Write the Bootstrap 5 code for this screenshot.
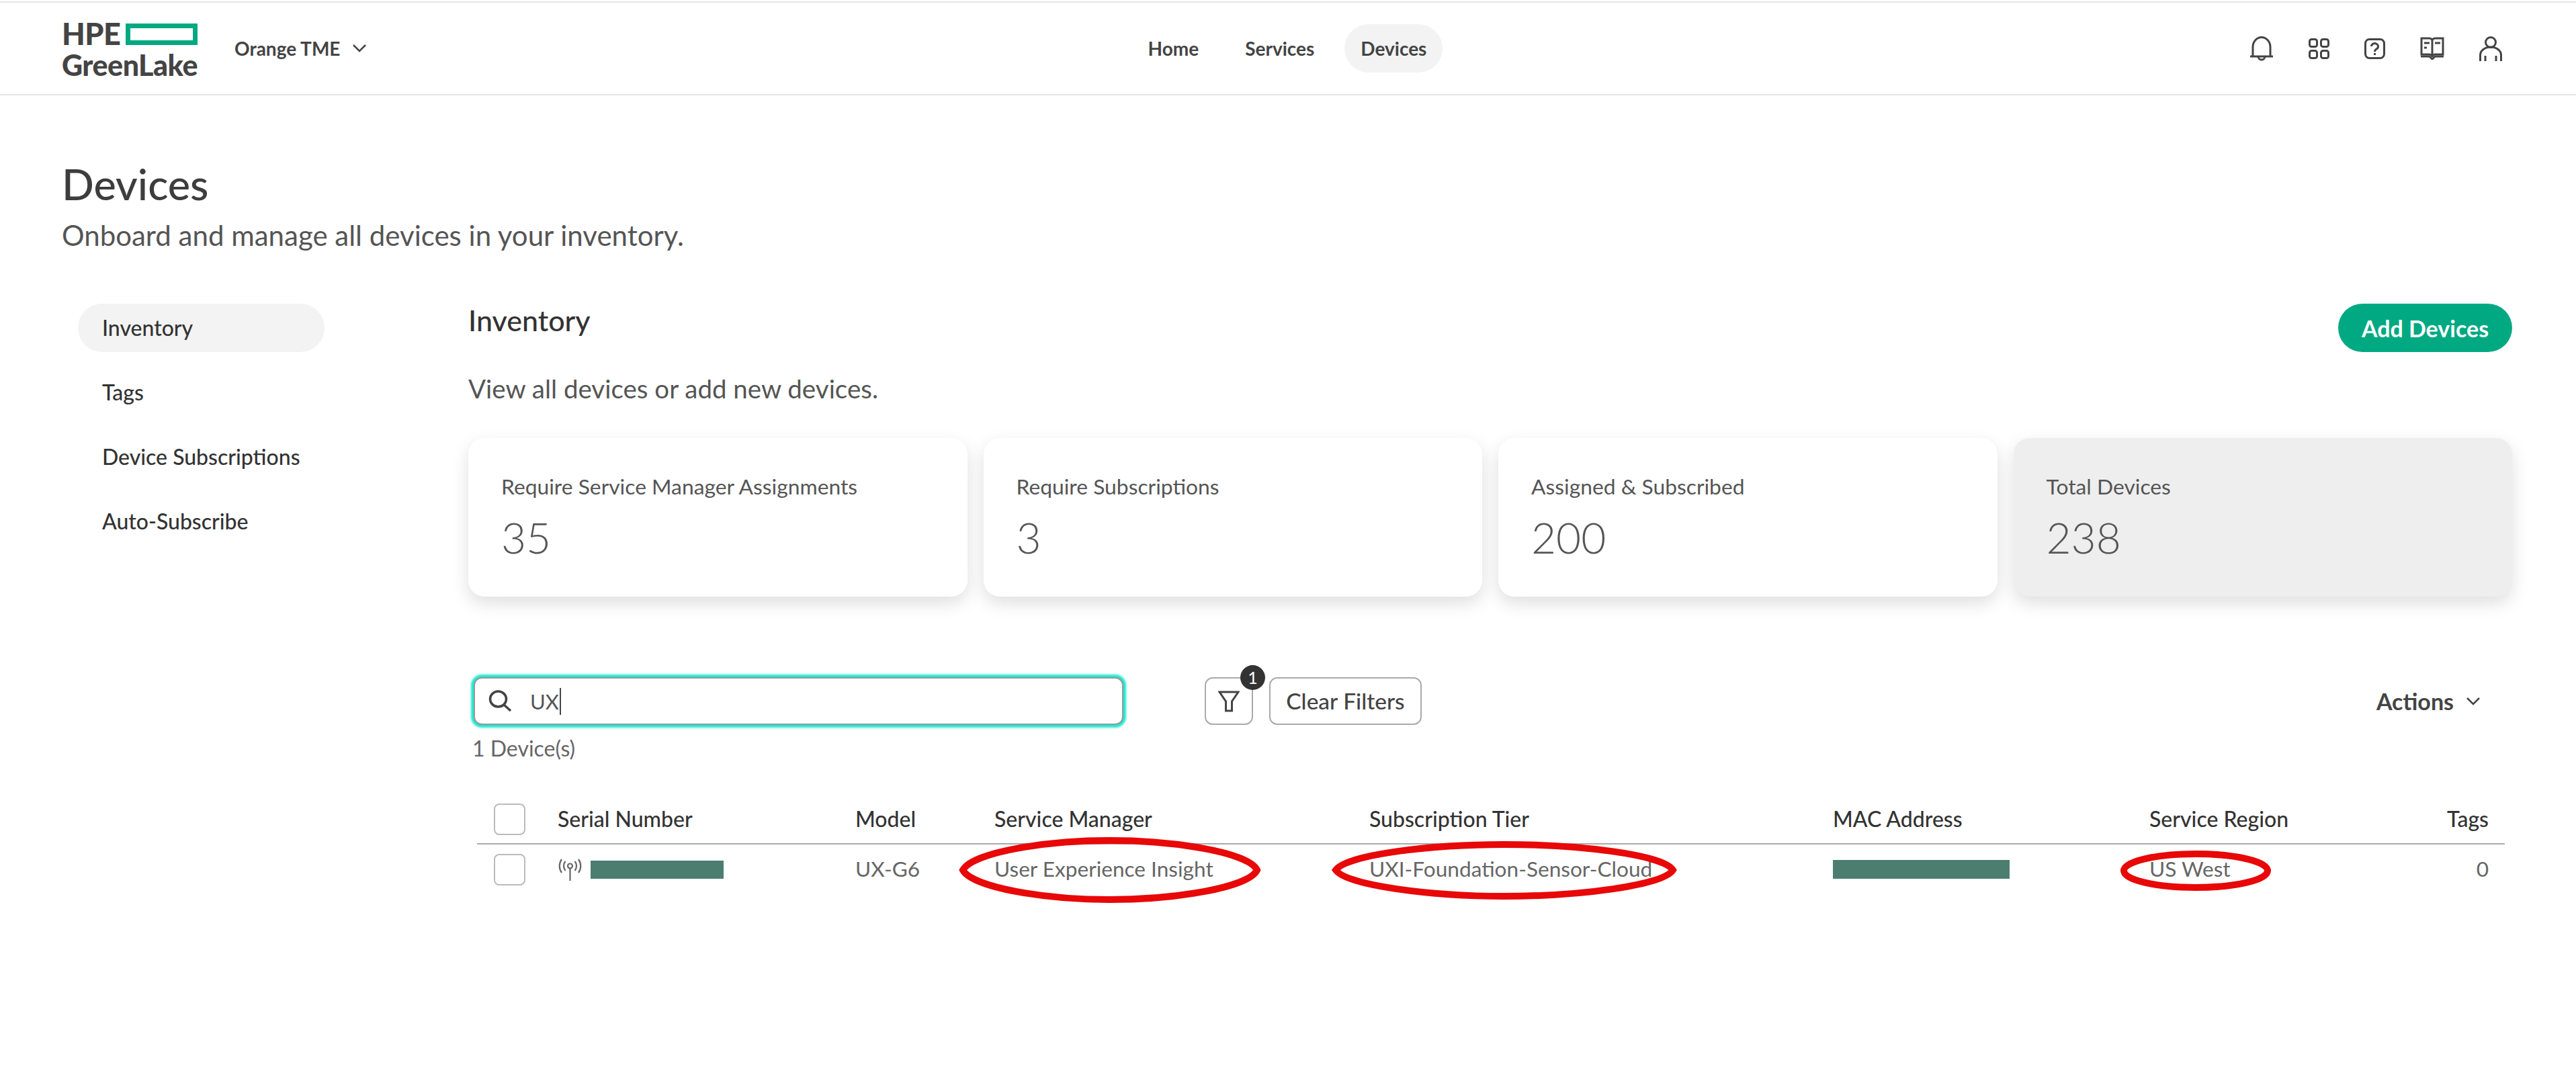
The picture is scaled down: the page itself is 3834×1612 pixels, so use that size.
<!DOCTYPE html>
<html lang="en">
<head>
<meta charset="utf-8">
<title>Devices</title>
<link href="https://cdn.jsdelivr.net/npm/bootstrap@5.3.0/dist/css/bootstrap.min.css" rel="stylesheet">
<style>
html,body{margin:0;height:100%;background:#fff}
body{font-family:"Lato","Noto Sans",sans-serif;color:#444;overflow:hidden}
.shell{position:relative;width:3834px;height:1612px}
.topbar{margin-top:2px;height:140px;border-top:2px solid #e6e6e6;border-bottom:2px solid #e6e6e6;padding:0 92px}
.side-zone{flex:1 1 0;min-width:0}
.brand{width:201px;line-height:1;font-weight:900;color:#444;white-space:nowrap}
.brand-top{height:34px;gap:8px;font-size:45px;letter-spacing:-.5px}
.brand-box{width:107px;height:32px;border:7px solid #01a982;flex:none}
.brand-bot{font-size:43px;margin-top:7px;letter-spacing:-.5px;height:36px}
.org{margin-left:56px;font-size:28px;font-weight:700;gap:19px;color:#444;white-space:nowrap}
.topnav{gap:21px;margin-left:16px}
.topnav .nav-link{height:72px;padding:0 24px;border-radius:36px;color:#444;font-size:28px;font-weight:700;display:flex;align-items:center}
.topnav .nav-link.active{background:#f3f3f3}
.tool-icons{gap:52px;margin-right:18px}
.pagehead{padding-left:92px;margin-top:96px}
.pagehead h1{font-size:63px;line-height:72px;font-weight:500;margin:0;color:#3d3d3d}
.pagehead p{font-size:42px;line-height:48px;margin:16px 0 0;color:#555}
.body-row{margin-top:78px;padding-left:116px}
.sidenav{width:366px;gap:24px}
.sidenav .nav-link{height:72px;padding:0 36px;border-radius:36px;font-size:32px;font-weight:500;color:#333;display:flex;align-items:center;white-space:nowrap}
.sidenav .nav-link.active{background:#f3f3f3}
.mainpane{margin-left:215px;width:3042px}
.pane-head{height:72px}
.pane-head h2{font-size:43px;line-height:50px;font-weight:500;margin:0;color:#333}
.btn-add{height:72px;width:259px;padding:0;border-radius:36px;border:0;background:#01a982;color:#fff;font-size:34px;font-weight:700}
.pane-sub{margin:30px 0 0;font-size:38.500px;line-height:48px;color:#555}
.stats{margin-top:50px;gap:24px}
.statcard{flex:1 1 0;height:236px;border:0;border-radius:24px;padding:0 49px;background:#fff;box-shadow:0 10px 26px rgba(0,0,0,.13)}
.statcard.muted-card{background:#eee}
.stat-label{font-size:31.800px;line-height:40px;margin-top:52px;color:#555}
.stat-value{font-size:64px;line-height:72px;font-weight:300;margin-top:20px;color:#555}
.toolbar{margin-top:120px;height:71px}
.searchbox{margin-left:8px;width:967px;height:71px;border:2px solid #999;border-radius:12px;box-shadow:0 0 3px 4px #1fe8d0;padding-left:20px;background:#fff}
.search-text{font-size:31px;margin-left:26px;color:#555;line-height:40px}
.caretbar{width:2px;height:40px;background:#444;margin-left:1px}
.btn-filter{position:relative;margin-left:121px;width:72px;height:71px;padding:0;border:2px solid #aaa;border-radius:12px;background:#fff;display:flex;align-items:center;justify-content:center}
.fbadge{position:absolute;top:-20px;right:-20px;width:37px;height:37px;border-radius:50%;background:#333;color:#fff;font-size:25px;font-weight:400;display:flex;align-items:center;justify-content:center}
.btn-clear{margin-left:24px;width:227px;height:71px;padding:0;border:2px solid #aaa;border-radius:12px;background:#fff;color:#444;font-size:33.500px;font-weight:500}
.actions{margin-left:auto;margin-right:48px;gap:19px;font-size:34px;font-weight:700;color:#444}
.count{margin:15px 0 0 6px;font-size:32px;line-height:40px;color:#666}
.devtable{margin:49px 0 0 13px;width:3018px;table-layout:fixed;--bs-table-bg:transparent;border-collapse:collapse}
.devtable th{height:73px;padding:0;vertical-align:middle;font-size:32px;font-weight:500;color:#333;border-bottom:2px solid #aaa}
.devtable td{height:75px;padding:0;vertical-align:middle;font-size:31.600px;color:#666;border:0}
.devtable .right-cell{text-align:right;padding-right:24px}
.pickbox{width:47px;height:47px;margin:0 0 0 25px;border:2.500px solid #bbb;border-radius:9px;background:#fff;display:block;float:none}
.redact{display:block;height:27px;background:#4c7e70}
.serial-wrap{gap:12px}
.notes{position:absolute;left:0;top:0;width:3834px;height:1612px;pointer-events:none}
</style>
</head>
<body>
<div class="shell">
  <header class="topbar d-flex align-items-center">
    <div class="side-zone d-flex align-items-center">
      <div class="brand">
        <div class="brand-top d-flex align-items-center"><span>HPE</span><span class="brand-box"></span></div>
        <div class="brand-bot">GreenLake</div>
      </div>
      <div class="org d-flex align-items-center">
        <span>Orange TME</span>
        <svg width="20" height="12" viewBox="0 0 20 12" fill="none" stroke="#444" stroke-width="2.5"><path d="M1 1l9 9 9-9"/></svg>
      </div>
    </div>
    <nav class="nav topnav">
      <a class="nav-link" href="#">Home</a>
      <a class="nav-link" href="#">Services</a>
      <a class="nav-link active" href="#">Devices</a>
    </nav>
    <div class="side-zone d-flex justify-content-end align-items-center tool-icons">
      <svg width="36" height="38" viewBox="0 0 36 38" fill="none" stroke="#444" stroke-width="3"><path d="M1 31h34M5 31V17a13 14.5 0 0 1 26 0v14M13 31a5 5 0 0 0 10 0"/></svg>
      <svg width="31" height="31" viewBox="0 0 31 31" fill="none" stroke="#444" stroke-width="3"><rect x="1.5" y="1.5" width="11" height="11" rx="3"/><rect x="18.5" y="1.5" width="11" height="11" rx="3"/><rect x="1.5" y="18.5" width="11" height="11" rx="3"/><rect x="18.5" y="18.5" width="11" height="11" rx="3"/></svg>
      <svg width="31" height="31" viewBox="0 0 31 31" fill="none" stroke="#444" stroke-width="3"><rect x="1.5" y="1.5" width="28" height="28" rx="6"/><path d="M10.5 12a5 4.5 0 1 1 7.5 4c-1.700 1-2.500 2-2.500 4"/><path d="M15.500 22v3"/></svg>
      <svg width="36" height="34" viewBox="0 0 36 34" fill="none" stroke="#444" stroke-width="3"><path d="M18 6a4 4 0 0 0-4-4H2v24h12a4 4 0 0 1 4 4 4 4 0 0 1 4-4h12V2H22a4 4 0 0 0-4 4v24"/><path d="M6 9h8M6 16h4M22 9h8"/><path d="M1 29h13l4 4 4-4h13"/></svg>
      <svg width="34" height="37" viewBox="0 0 34 37" fill="none" stroke="#444" stroke-width="3"><circle cx="17" cy="9" r="7.500"/><path d="M1.500 37V28a15.500 12 0 0 1 31 0v9M9 29v8M25 29v8"/></svg>
    </div>
  </header>

  <div class="pagehead">
    <h1>Devices</h1>
    <p>Onboard and manage all devices in your inventory.</p>
  </div>

  <div class="body-row d-flex align-items-start">
    <nav class="nav flex-column sidenav">
      <a class="nav-link active" href="#">Inventory</a>
      <a class="nav-link" href="#">Tags</a>
      <a class="nav-link" href="#">Device Subscriptions</a>
      <a class="nav-link" href="#">Auto-Subscribe</a>
    </nav>
    <main class="mainpane">
      <div class="pane-head d-flex justify-content-between align-items-start">
        <h2>Inventory</h2>
        <button class="btn btn-add" type="button">Add Devices</button>
      </div>
      <p class="pane-sub">View all devices or add new devices.</p>

      <div class="stats d-flex">
        <div class="card statcard"><div class="stat-label">Require Service Manager Assignments</div><div class="stat-value">35</div></div>
        <div class="card statcard"><div class="stat-label">Require Subscriptions</div><div class="stat-value">3</div></div>
        <div class="card statcard"><div class="stat-label">Assigned &amp; Subscribed</div><div class="stat-value">200</div></div>
        <div class="card statcard muted-card"><div class="stat-label">Total Devices</div><div class="stat-value">238</div></div>
      </div>

      <div class="toolbar d-flex align-items-center">
        <div class="searchbox d-flex align-items-center">
          <svg width="36" height="33" viewBox="0 0 36 33" fill="none" stroke="#444" stroke-width="3.500"><ellipse cx="14.500" cy="13.500" rx="12" ry="11.500"/><path d="M23 22l10 9"/></svg>
          <span class="search-text">UX</span><span class="caretbar"></span>
        </div>
        <button class="btn btn-filter" type="button">
          <svg width="32" height="32" viewBox="0 0 32 32" fill="none" stroke="#444" stroke-width="3"><path d="M2 2h28L20.500 16v14h-9V16z"/></svg>
          <span class="fbadge">1</span>
        </button>
        <button class="btn btn-clear" type="button">Clear Filters</button>
        <div class="actions d-flex align-items-center">
          <span>Actions</span>
          <svg width="20" height="12" viewBox="0 0 20 12" fill="none" stroke="#444" stroke-width="2.500"><path d="M1 1l9 9 9-9"/></svg>
        </div>
      </div>
      <div class="count">1 Device(s)</div>

      <table class="table devtable">
        <colgroup>
          <col style="width:120px"><col style="width:443px"><col style="width:207px"><col style="width:558px"><col style="width:690px"><col style="width:471px"><col style="width:401px"><col style="width:128px">
        </colgroup>
        <thead>
          <tr>
            <th><input class="form-check-input pickbox" type="checkbox" aria-label="Select all"></th>
            <th>Serial Number</th><th>Model</th><th>Service Manager</th><th>Subscription Tier</th><th>MAC Address</th><th>Service Region</th><th class="right-cell">Tags</th>
          </tr>
        </thead>
        <tbody>
          <tr>
            <td><input class="form-check-input pickbox" type="checkbox" aria-label="Select row"></td>
            <td>
              <div class="d-flex align-items-center serial-wrap">
                <svg width="37" height="33" viewBox="0 0 37 33" fill="none" stroke="#666" stroke-width="2.200"><circle cx="18.500" cy="11" r="3.500"/><path d="M18.500 14.500V33M11.500 4a11 11 0 0 0 0 14M25.500 4a11 11 0 0 1 0 14M6 1a17 17 0 0 0 0 20M31 1a17 17 0 0 1 0 20"/></svg>
                <span class="redact" style="width:198px"></span>
              </div>
            </td>
            <td>UX-G6</td>
            <td>User Experience Insight</td>
            <td>UXI-Foundation-Sensor-Cloud</td>
            <td><span class="redact" style="width:263px;height:28px"></span></td>
            <td>US West</td>
            <td class="right-cell">0</td>
          </tr>
        </tbody>
      </table>
    </main>
  </div>

  <svg class="notes" viewBox="0 0 3834 1612" fill="none" stroke="#e80808" stroke-width="10" aria-hidden="true">
    <path d="M1433 1293C1448 1266 1560 1249 1651 1249C1745 1249 1858 1266 1871 1293C1858 1320 1745 1337 1651 1337C1560 1337 1448 1320 1433 1293Z"/>
    <path d="M1988 1293C2004 1270 2130 1255 2239 1255C2350 1255 2476 1270 2490 1293C2476 1316 2350 1332 2239 1332C2130 1332 2004 1316 1988 1293Z"/>
    <ellipse cx="3268" cy="1294" rx="107" ry="25"/>
  </svg>
</div>
<script src="https://cdn.jsdelivr.net/npm/bootstrap@5.3.0/dist/js/bootstrap.bundle.min.js"></script>
</body>
</html>
